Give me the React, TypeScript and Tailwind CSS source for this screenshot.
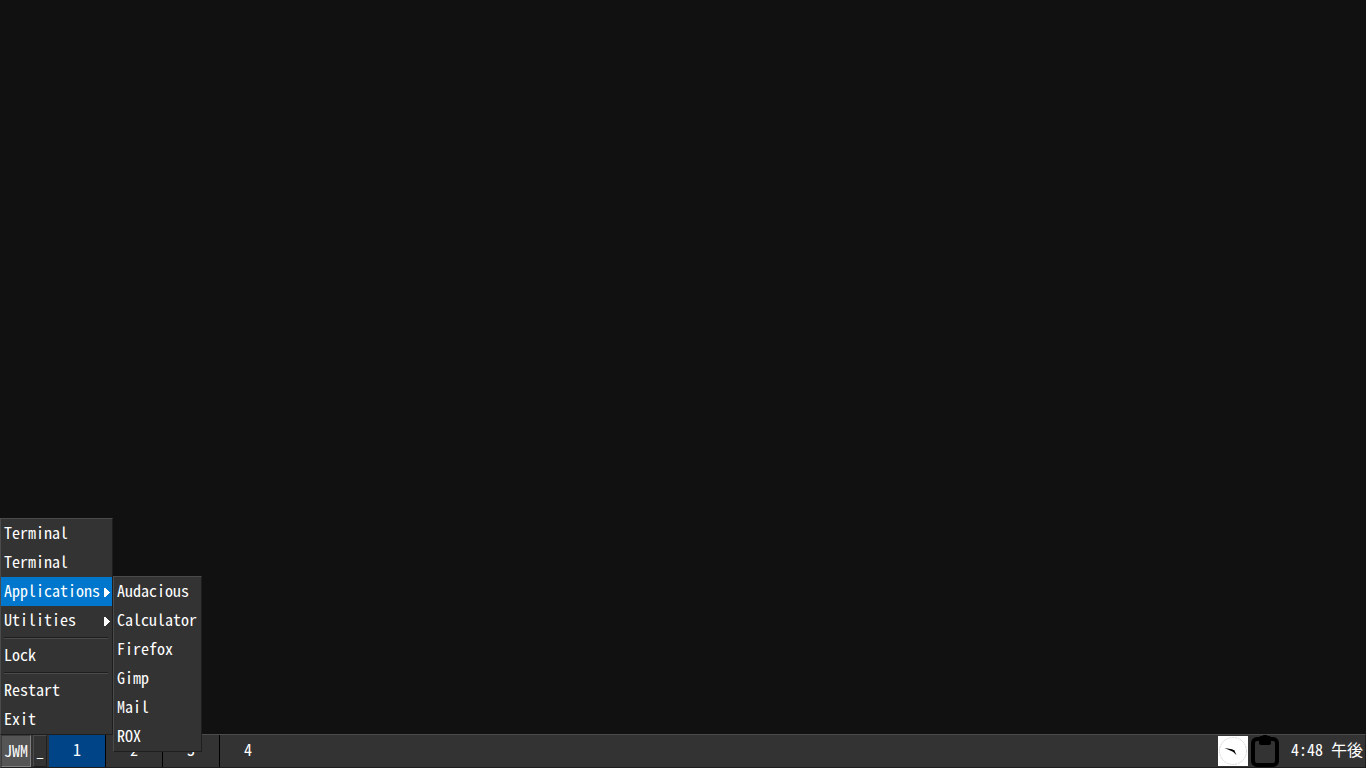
import clsx from "clsx";

type MenuEntry = { label: string; submenu?: boolean; active?: boolean };

const rootMenu: MenuEntry[][] = [
  [
    { label: "Terminal" },
    { label: "Terminal" },
    { label: "Applications", submenu: true, active: true },
    { label: "Utilities", submenu: true },
  ],
  [{ label: "Lock" }],
  [{ label: "Restart" }, { label: "Exit" }],
];

const applications: MenuEntry[] = [
  { label: "Audacious" },
  { label: "Calculator" },
  { label: "Firefox" },
  { label: "Gimp" },
  { label: "Mail" },
  { label: "ROX" },
];

const desktops = [1, 2, 3, 4];
const currentDesktop = 1;

const raised = "border border-t-[#4b4b4b] border-l-[#4b4b4b] border-r-[#1e1e1e] border-b-[#1e1e1e]";

function MenuItem({ entry }: { entry: MenuEntry }) {
  return (
    <button
      type="button"
      role="menuitem"
      aria-haspopup={entry.submenu ? "menu" : undefined}
      className={clsx(
        "flex h-[29px] w-full items-center justify-between pl-[3px] pr-[2px] text-left whitespace-pre",
        entry.active && "bg-[#0077cc]"
      )}
    >
      <span className="pb-1">{entry.label}</span>
      {entry.submenu && (
        <svg className="h-[11px] w-[6px]" viewBox="0 0 6 11" fill="currentColor" shapeRendering="crispEdges" aria-hidden="true">
          <path d="M0 2h2v1h1v1h1v1h1v1h1v1h-1v1h-1v1h-1v1h-1v1h-2z" />
        </svg>
      )}
    </button>
  );
}

function Taskbar() {
  return (
    <footer className={clsx("flex h-[34px] items-stretch bg-[#333333]", raised)}>
      <button
        type="button"
        className="w-[30px] border border-t-[#3a3a3a] border-l-[#3a3a3a] border-r-[#808080] border-b-[#808080] bg-[#555555] pb-[2px] text-center"
      >
        JWM
      </button>
      <button type="button" aria-label="Show desktop" className={clsx("ml-[2px] w-[14px] pb-[2px]", raised)}>
        <span className="-mx-1 block text-center">_</span>
      </button>

      {/* Desktop pager */}
      <nav className="ml-[2px] flex">
        {desktops.map((n) => (
          <button
            key={n}
            type="button"
            className={clsx(
              "w-[57px] border-r border-black pb-1 text-center last:border-transparent",
              n === currentDesktop && "bg-[#004488]"
            )}
          >
            {n}
          </button>
        ))}
      </nav>

      {/* Tray */}
      <div className="ml-auto flex items-center">
        <svg className="h-[30px] w-[30px]" viewBox="0 0 30 30" role="img" aria-label="Clock">
          <rect width="30" height="30" fill="#ffffff" />
          <circle cx="15" cy="15" r="13.5" fill="none" stroke="#d8d8d8" strokeWidth="1" strokeDasharray="2 0.83" />
          <path d="M6.5 12 14 13.2 16.5 14.8 15.5 16Z" fill="#000000" />
          <path d="M14.5 13.8 16.3 14.2 18.5 19.2 15 15.8Z" fill="#000000" />
        </svg>
        <svg className="ml-[3px] h-[32px] w-[28px]" viewBox="0 0 28 32" role="img" aria-label="Clipboard">
          <rect x="2" y="4" width="24" height="26" rx="4" fill="none" stroke="#000000" strokeWidth="4" />
          <rect x="8" y="1" width="12" height="9" rx="2" fill="#000000" />
          <rect x="11" y="0" width="6" height="4" rx="2" fill="#000000" />
        </svg>
        <time className="ml-3 mr-[2px] pb-1 whitespace-nowrap">4:48 午後</time>
      </div>
    </footer>
  );
}

export default function App() {
  return (
    <div className="relative flex min-h-screen flex-col overflow-hidden bg-[#111111] font-['Noto_Sans_Mono_CJK_JP','Noto_Sans_CJK_JP',monospace] text-[16px] leading-[24px] text-white">
      <main className="flex-1" />
      <Taskbar />

      {/* Root menu, opened from the JWM button */}
      <div role="menu" aria-label="JWM" className={clsx("absolute bottom-[33px] left-0 w-[113px] bg-[#333333]", raised)}>
        {rootMenu.map((group, i) => (
          <div key={i}>
            {i > 0 && (
              <div className="py-[2px] pl-[3px] pr-1">
                <hr className="h-[2px] border-t border-b border-t-[#1e1e1e] border-b-[#4b4b4b]" />
              </div>
            )}
            {group.map((entry, j) => (
              <MenuItem key={j} entry={entry} />
            ))}
          </div>
        ))}
      </div>

      <div
        role="menu"
        aria-label="Applications"
        className={clsx("absolute bottom-[16px] left-[113px] w-[89px] bg-[#333333]", raised)}
      >
        {applications.map((entry) => (
          <MenuItem key={entry.label} entry={entry} />
        ))}
      </div>
    </div>
  );
}
